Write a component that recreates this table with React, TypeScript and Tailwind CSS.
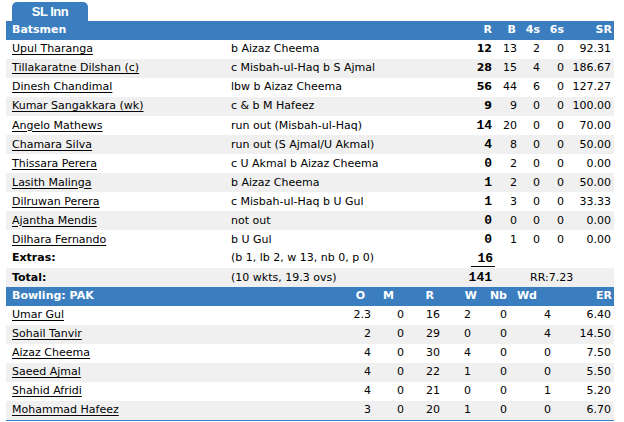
import React from "react";

const bat: [string, string, string, string, string, string, string, boolean][] = [
  ["Upul Tharanga", "b Aizaz Cheema", "12", "13", "2", "0", "92.31", false],
  ["Tillakaratne Dilshan (c)", "c Misbah-ul-Haq b S Ajmal", "28", "15", "4", "0", "186.67", false],
  ["Dinesh Chandimal", "lbw b Aizaz Cheema", "56", "44", "6", "0", "127.27", false],
  ["Kumar Sangakkara (wk)", "c & b M Hafeez", "9", "9", "0", "0", "100.00", false],
  ["Angelo Mathews", "run out (Misbah-ul-Haq)", "14", "20", "0", "0", "70.00", true],
  ["Chamara Silva", "run out (S Ajmal/U Akmal)", "4", "8", "0", "0", "50.00", true],
  ["Thissara Perera", "c U Akmal b Aizaz Cheema", "0", "2", "0", "0", "0.00", true],
  ["Lasith Malinga", "b Aizaz Cheema", "1", "2", "0", "0", "50.00", true],
  ["Dilruwan Perera", "c Misbah-ul-Haq b U Gul", "1", "3", "0", "0", "33.33", true],
  ["Ajantha Mendis", "not out", "0", "0", "0", "0", "0.00", true],
  ["Dilhara Fernando", "b U Gul", "0", "1", "0", "0", "0.00", true],
];

const bowl: string[][] = [
  ["Umar Gul", "2.3", "0", "16", "2", "0", "4", "6.40"],
  ["Sohail Tanvir", "2", "0", "29", "0", "0", "4", "14.50"],
  ["Aizaz Cheema", "4", "0", "30", "4", "0", "0", "7.50"],
  ["Saeed Ajmal", "4", "0", "22", "1", "0", "0", "5.50"],
  ["Shahid Afridi", "4", "0", "21", "0", "0", "1", "5.20"],
  ["Mohammad Hafeez", "3", "0", "20", "1", "0", "0", "6.70"],
];

const batCols = "grid grid-cols-[219px_236px_34px_25px_23px_24px_47px]";
const bowlCols = "grid grid-cols-[330px_38px_33px_36px_31px_36px_44px_60px]";
const bowlHeadCols = "grid grid-cols-[330px_32px_29px_40px_43px_30px_30px_74px]";

export default function App() {
  return (
    <div
      className="w-[624px] h-[422px] bg-white text-black text-[11px] overflow-hidden"
      style={{ fontFamily: '"DejaVu Sans", Verdana, sans-serif' }}
    >
      <div className="pt-[2px] pl-[12px]">
        <div
          className="w-[76px] h-[19px] bg-[#3a7ebf] rounded-t-[5px] text-white font-bold text-[13px] tracking-[-0.5px] flex items-center justify-center"
          style={{ fontFamily: '"Liberation Sans", Arial, sans-serif' }}
        >
          SL Inn
        </div>
      </div>
      <div className="ml-[6px] w-[608px] border-b border-[#3a7ebf]">
        <div className={`${batCols} h-[19px] items-center bg-[#3a7ebf] text-white font-bold`}>
          <div className="pl-[6px]">Batsmen</div>
          <div />
          <div className="text-right pr-[3px]">R</div>
          <div className="text-right pr-[4px]">B</div>
          <div className="text-right pr-[3px]">4s</div>
          <div className="text-right pr-[3px]">6s</div>
          <div className="text-right pr-[2px]">SR</div>
        </div>
        {bat.map((r, i) => (
          <div
            key={r[0]}
            className={`${batCols} h-[19px] items-center ${i % 2 === 1 ? "bg-[#f0f0f0]" : "bg-white"}`}
          >
            <div className="pl-[6px] underline underline-offset-[2px] whitespace-nowrap">{r[0]}</div>
            <div className="pl-[6px] whitespace-nowrap">{r[1]}</div>
            {r[7] ? (
              <div
                className="text-right pr-[3px] font-bold text-[13px]"
                style={{ fontFamily: '"Liberation Mono", "Courier New", monospace' }}
              >
                {r[2]}
              </div>
            ) : (
              <div className="text-right pr-[3px] font-bold">{r[2]}</div>
            )}
            <div className="text-right pr-[3px]">{r[3]}</div>
            <div className="text-right pr-[3px]">{r[4]}</div>
            <div className="text-right pr-[3px]">{r[5]}</div>
            <div className="text-right pr-[3px]">{r[6]}</div>
          </div>
        ))}
        <div className={`${batCols} h-[19px] items-center bg-white`}>
          <div className="pl-[6px] font-bold">Extras:</div>
          <div className="pl-[6px] whitespace-nowrap">(b 1, lb 2, w 13, nb 0, p 0)</div>
          <div className="flex justify-end pr-[0px]">
            <span
              className="font-bold text-[13px] border-b border-black pl-[6px] pr-[2px] leading-[15px]"
              style={{ fontFamily: '"Liberation Mono", "Courier New", monospace' }}
            >
              16
            </span>
          </div>
          <div />
          <div />
          <div />
          <div />
        </div>
        <div className={`${batCols} h-[19px] items-center bg-[#f0f0f0]`}>
          <div className="pl-[6px] font-bold">Total:</div>
          <div className="pl-[6px] whitespace-nowrap">(10 wkts, 19.3 ovs)</div>
          <div
            className="text-right pr-[3px] font-bold text-[13px]"
            style={{ fontFamily: '"Liberation Mono", "Courier New", monospace' }}
          >
            141
          </div>
          <div className="col-span-4 pl-[35px]">RR:7.23</div>
        </div>
        <div className={`${bowlHeadCols} h-[19px] items-center bg-[#3a7ebf] text-white font-bold`}>
          <div className="pl-[6px]">Bowling: PAK</div>
          <div className="text-right pr-[3px]">O</div>
          <div className="text-right pr-[3px]">M</div>
          <div className="text-right pr-[3px]">R</div>
          <div className="text-right pr-[3px]">W</div>
          <div className="text-right pr-[3px]">Nb</div>
          <div className="text-right pr-[3px]">Wd</div>
          <div className="text-right pr-[2px]">ER</div>
        </div>
        {bowl.map((r, i) => (
          <div
            key={r[0]}
            className={`${bowlCols} h-[19px] items-center ${i % 2 === 1 ? "bg-[#f0f0f0]" : "bg-white"}`}
          >
            <div className="pl-[6px] underline underline-offset-[2px] whitespace-nowrap">{r[0]}</div>
            {r.slice(1).map((v, j) => (
              <div key={j} className="text-right pr-[3px]">
                {v}
              </div>
            ))}
          </div>
        ))}
      </div>
    </div>
  );
}
